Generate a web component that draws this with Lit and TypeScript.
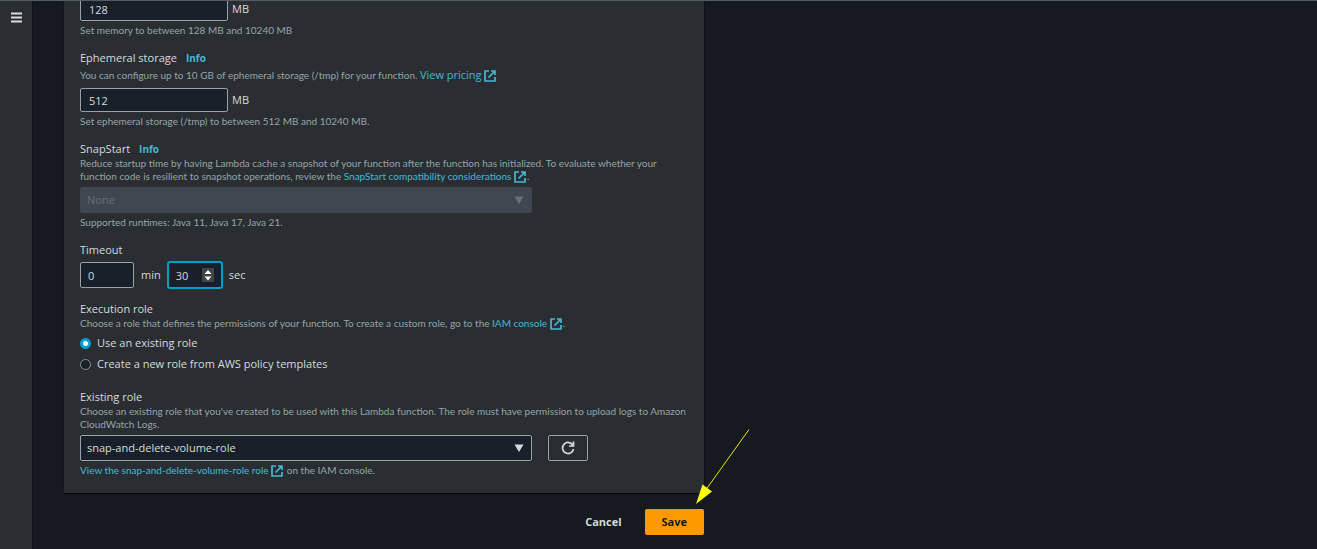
import { LitElement, html, css, svg } from "lit";
import { customElement, state } from "lit/decorators.js";

const externalIcon = html`<svg class="ext" viewBox="0 0 12 12" aria-hidden="true">
  <path d="M5 1H1v10h10V7M7 1h4v4M11 1L4.5 7.500" fill="none" stroke="currentColor" stroke-width="1.700" />
</svg>`;

const caret = svg`<svg class="caret" viewBox="0 0 10 8" aria-hidden="true"><path d="M0.500 0.500h9L5 8z" fill="currentColor" /></svg>`;

@customElement("app-root")
export class AppRoot extends LitElement {
  @state() private roleMode = "existing";

  static styles = css`
    :host {
      display: flex;
      flex-direction: column;
      min-height: 100vh;
      box-sizing: border-box;
      border-top: 1px solid #545b64;
      background: #16191f;
      color: #d5dbdb;
      font: 500 11px/16px "Open Sans", "Noto Sans", sans-serif;
    }
    *, *::before { box-sizing: border-box; }
    .shell { display: flex; flex: 1; }
    .rail {
      flex: none;
      width: 33px;
      padding: 8px 8px 0;
      background: #2a2e33;
      border-right: 1px solid #101317;
    }
    .menu { display: block; width: 16px; height: 16px; padding: 0; border: 0; background: none; color: #d5dbdb; }
    .menu svg { display: block; width: 16px; height: 16px; }
    main { flex: 1; padding: 0 31px; overflow: hidden; }
    form { width: 100%; max-width: 640px; }
    .panel {
      display: flex;
      flex-direction: column;
      gap: 13px;
      margin-top: -4px;
      padding: 0 16px 16px;
      background: #2a2e33;
      box-shadow: 0 1px 1px #0a0c0f, 1px 0 1px #101317;
    }
    .field { display: flex; flex-direction: column; margin: 0; padding: 0; border: 0; min-width: 0; }
    .role { padding-top: 4px; }
    .head { display: flex; align-items: center; gap: 9px; padding: 0; }
    .info { font-size: 10px; font-weight: 700; }
    a { color: #44b9d6; text-decoration: none; }
    p { margin: 0; font: 400 10px/13px Lato, "Noto Sans", sans-serif; color: #95a5a6; }
    .hint { padding-top: 3px; }
    .desc { padding-bottom: 4px; }
    .spaced { padding: 2px 0 6px; line-height: 14px; }
    .big a { font: 500 11px/14px "Open Sans", "Noto Sans", sans-serif; }
    .ext { width: 12px; height: 12px; margin-right: 1px; vertical-align: -3px; }
    .row { display: flex; align-items: center; gap: 4px; }
    .time { gap: 7px; padding-top: 4px; }
    input, select, button { font: inherit; color: inherit; }
    input[type="number"] {
      width: 148px;
      height: 24px;
      margin: 0;
      padding: 0 8px;
      border: 1px solid #95a5a6;
      border-radius: 2px;
      outline: 0;
      background: #1a2029;
      color-scheme: dark;
    }
    input[type="number"]::-webkit-inner-spin-button { opacity: 0; }
    .time input[type="number"] { width: 54px; height: 26px; padding: 0 7px; }
    .time input[type="number"].active { border-color: #00a1c9; box-shadow: 0 0 0 1px #00a1c9; }
    .time input[type="number"].active::-webkit-inner-spin-button {
      appearance: none;
      width: 12px;
      height: 14px;
      opacity: 1;
      background: #444444 url("data:image/svg+xml,%3Csvg xmlns='http://www.w3.org/2000/svg' viewBox='0 0 12 14'%3E%3Cpath d='M2.500 6L6 2L9.500 6zM2.500 8.500h7L6 12.500z' fill='white'/%3E%3C/svg%3E") center / 12px 14px no-repeat;
    }
    .pick { display: grid; align-items: center; width: 452px; }
    .pick > * { grid-area: 1 / 1; }
    .pick select {
      appearance: none;
      width: 100%;
      height: 26px;
      padding: 0 6px;
      border: 1px solid #95a5a6;
      border-radius: 2px;
      background: #1a2029;
    }
    .pick select:disabled { border-color: #414750; background: #414750; color: #687078; opacity: 1; }
    .off { color: #687078; }
    .caret { justify-self: end; width: 10px; height: 8px; margin-right: 8px; pointer-events: none; }
    .refresh {
      display: grid;
      place-items: center;
      width: 40px;
      height: 26px;
      margin-left: 12px;
      padding: 0;
      border: 1px solid #95a5a6;
      border-radius: 2px;
      background: none;
    }
    .refresh svg { width: 14px; height: 14px; }
    .radios { display: flex; flex-direction: column; gap: 5px; padding-top: 1px; }
    .radios label { display: flex; align-items: center; gap: 6px; }
    input[type="radio"] {
      appearance: none;
      width: 11px;
      height: 11px;
      margin: 0;
      border: 1px solid #879596;
      border-radius: 50%;
      background: #1a2029;
    }
    input[type="radio"]:checked { border: 3px solid #00a1c9; background: #ffffff; }
    .actions { display: flex; justify-content: flex-end; gap: 6px; padding-top: 16px; }
    .actions button { height: 26px; padding: 0 17px; border: 0; border-radius: 2px; background: none; font-weight: 700; }
    .actions .save { background: #ff9900; color: #16191f; }
    .arrow { position: absolute; left: 690px; top: 424px; width: 64px; height: 84px; pointer-events: none; }
  `;

  private link(text: string) {
    return html`<a href="#">${text} ${externalIcon}</a>`;
  }

  render() {
    return html`
      <div class="shell">
        <nav class="rail">
          <button class="menu" aria-label="Open navigation">
            <svg viewBox="0 0 16 16"><path d="M3 4.500h11M3 8.500h11M3 12.500h11" stroke="currentColor" stroke-width="1.800" /></svg>
          </button>
        </nav>
        <main>
          <form @submit=${(e: Event) => e.preventDefault()}>
            <div class="panel">
              <div class="field">
                <div class="row">
                  <input id="memory" type="number" value="128" aria-label="Memory" />
                  <label for="memory">MB</label>
                </div>
                <p class="hint">Set memory to between 128 MB and 10240 MB</p>
              </div>

              <div class="field">
                <div class="head"><label for="storage">Ephemeral storage</label><a class="info" href="#">Info</a></div>
                <p class="desc spaced">You can configure up to 10 GB of ephemeral storage (/tmp) for your function. <span class="big">${this.link("View pricing")}</span></p>
                <div class="row"><input id="storage" type="number" value="512" /><span>MB</span></div>
                <p class="hint">Set ephemeral storage (/tmp) to between 512 MB and 10240 MB.</p>
              </div>

              <div class="field">
                <div class="head"><label for="snap">SnapStart</label><a class="info" href="#">Info</a></div>
                <p class="desc">Reduce startup time by having Lambda cache a snapshot of your function after the function has initialized. To evaluate whether your function code is resilient to snapshot operations, review the ${this.link("SnapStart compatibility considerations")}.</p>
                <div class="pick off"><select id="snap" disabled><option>None</option></select>${caret}</div>
                <p class="hint">Supported runtimes: Java 11, Java 17, Java 21.</p>
              </div>

              <fieldset class="field">
                <legend class="head">Timeout</legend>
                <div class="row time">
                  <input id="min" type="number" value="0" /><label for="min">min</label>
                  <input id="sec" class="active" type="number" value="30" /><label for="sec">sec</label>
                </div>
              </fieldset>

              <fieldset class="field">
                <legend class="head">Execution role</legend>
                <p class="desc">Choose a role that defines the permissions of your function. To create a custom role, go to the ${this.link("IAM console")}.</p>
                <div class="radios">
                  <label><input type="radio" name="role" .checked=${this.roleMode === "existing"} @change=${() => (this.roleMode = "existing")} />Use an existing role</label>
                  <label><input type="radio" name="role" .checked=${this.roleMode === "new"} @change=${() => (this.roleMode = "new")} />Create a new role from AWS policy templates</label>
                </div>
              </fieldset>

              <div class="field role">
                <label for="existing">Existing role</label>
                <p class="desc">Choose an existing role that you've created to be used with this Lambda function. The role must have permission to upload logs to Amazon CloudWatch Logs.</p>
                <div class="row">
                  <div class="pick"><select id="existing"><option>snap-and-delete-volume-role</option></select>${caret}</div>
                  <button class="refresh" type="button" aria-label="Refresh roles">
                    <svg viewBox="0 0 14 14"><path d="M12 4.500A5.500 5.500 0 1 0 12.500 8M12.500 0.500v4.500H8" fill="none" stroke="currentColor" stroke-width="1.700" /></svg>
                  </button>
                </div>
                <p class="hint">${this.link("View the snap-and-delete-volume-role role")} on the IAM console.</p>
              </div>
            </div>
            <div class="actions">
              <button type="button">Cancel</button>
              <button class="save" type="submit">Save</button>
            </div>
          </form>
        </main>
      </div>
      <svg class="arrow" viewBox="0 0 64 84" aria-hidden="true">
        <path d="M59 5.500L15 67" stroke="#e8e800" stroke-width="1" />
        <path d="M6 80L12.500 60.500L22 67.500z" fill="#ffff00" />
      </svg>
    `;
  }
}
